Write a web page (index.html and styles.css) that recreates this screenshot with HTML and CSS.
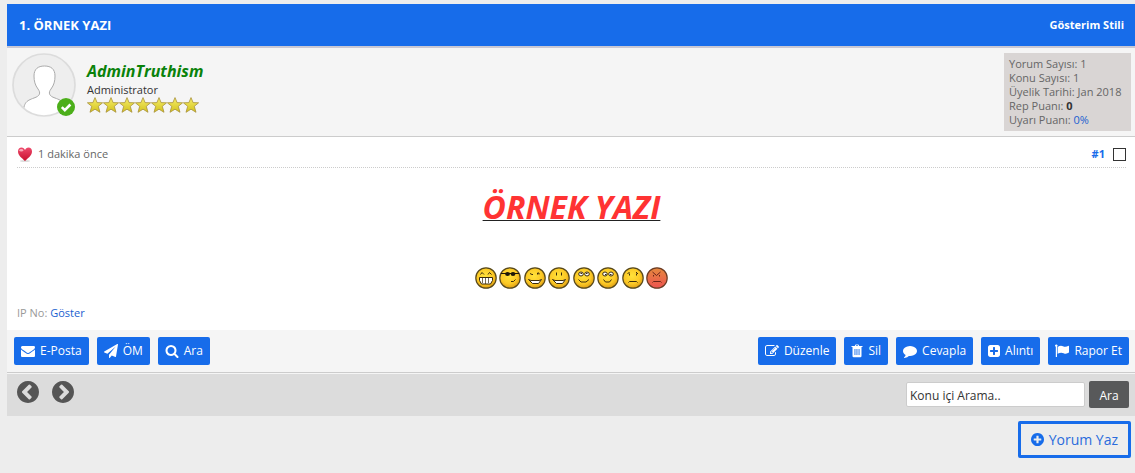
FILE: index.html
```html
<!DOCTYPE html>
<html lang="tr">
<head>
<meta charset="utf-8">
<title>Örnek Yazı</title>
<link rel="stylesheet" href="styles.css">
</head>
<body>
<svg class="defs" aria-hidden="true">
  <defs>
    <radialGradient id="yellow" cx="45%" cy="40%" r="65%"><stop offset="0" stop-color="#ffe23a"/><stop offset=".6" stop-color="#fcc926"/><stop offset="1" stop-color="#d9960f"/></radialGradient>
    <linearGradient id="red" x1="0" y1="0" x2="0" y2="1"><stop offset="0" stop-color="#e58a3e"/><stop offset="1" stop-color="#ee5350"/></linearGradient>
    <linearGradient id="gold" x1="0" y1="0" x2="0" y2="1"><stop offset="0" stop-color="#f7ee6a"/><stop offset="1" stop-color="#d2c21c"/></linearGradient>
    <linearGradient id="rose" x1="0" y1="0" x2="0" y2="1"><stop offset="0" stop-color="#ee4a6c"/><stop offset="1" stop-color="#c8102e"/></linearGradient>
    <symbol id="star" viewBox="0 0 16 16"><path d="M8 .6l2.100 5 5.500.2-4.300 3.500 1.700 6L8 12.200l-5 3.100 1.700-6L.4 5.800l5.500-.2z" fill="url(#gold)" stroke="#a8923c" stroke-width=".8" stroke-linejoin="round"/></symbol>
    <symbol id="face" viewBox="0 0 22 22"><circle cx="11" cy="11" r="10.200" fill="url(#yellow)" stroke="#57481a" stroke-width="1.200"/></symbol>
  </defs>
</svg>
<main class="thread">
  <header class="thread-bar">
    <h1 class="thread-title">1. ÖRNEK YAZI</h1>
    <a class="view-link" href="#">Gösterim Stili</a>
  </header>

  <article class="post">
    <section class="author">
      <div class="avatar">
        <svg class="portrait" viewBox="0 0 64 64" aria-hidden="true">
          <clipPath id="round"><circle cx="32" cy="32" r="31"/></clipPath>
          <circle cx="32" cy="32" r="31" fill="#eee"/>
          <path clip-path="url(#round)" d="M11 66C11 49 14 48 22 45C28 43 29 40 26 36C23 32 22 28 22 23C22 16 26 13 32.500 13C39 13 43 16 43 23C43 28 42 32 39 36C36 40 37 43 43 45C51 48 54 49 56 66z" fill="#fff" stroke="#aaa"/>
          <circle cx="32" cy="32" r="31" fill="none" stroke="#dcdcdc" stroke-width="1.700"/>
        </svg>
        <svg class="online" viewBox="0 0 18 18" aria-hidden="true"><circle cx="9" cy="9" r="9" fill="#4caf1a"/><path d="M4.800 9.200l3 3 5.600-5.700" fill="none" stroke="#fff" stroke-width="2.600"/></svg>
      </div>
      <div class="identity">
        <a class="name" href="#">AdminTruthism</a>
        <span class="role">Administrator</span>
        <span class="stars" role="img" aria-label="7 yıldız">
          <svg><use href="#star"/></svg><svg><use href="#star"/></svg><svg><use href="#star"/></svg><svg><use href="#star"/></svg><svg><use href="#star"/></svg><svg><use href="#star"/></svg><svg><use href="#star"/></svg>
        </span>
      </div>
      <div class="stats">
        <div>Yorum Sayısı: 1</div>
        <div>Konu Sayısı: 1</div>
        <div>Üyelik Tarihi: Jan 2018</div>
        <div>Rep Puanı: <strong>0</strong></div>
        <div>Uyarı Puanı: <a href="#">0%</a></div>
      </div>
    </section>

    <div class="content">
      <div class="meta">
        <svg class="heart" viewBox="0 0 16 16" aria-hidden="true"><ellipse cx="8" cy="15" rx="5" ry="1" fill="#ddd"/><path d="M8 15C5 12 1 9.500 1 5.500C1 3 2.500 1.500 4.500 1.500C6.200 1.500 7.400 2.600 8 4C8.600 2.600 9.800 1.500 11.500 1.500C13.500 1.500 15 3 15 5.500C15 9.500 11 12 8 15z" fill="url(#rose)"/><ellipse cx="4.300" cy="4.200" rx="1.900" ry="1.300" fill="#f9a9b8"/></svg>
        <time>1 dakika önce</time>
        <a class="number" href="#">#1</a>
        <input class="pick" type="checkbox" aria-label="Yorumu seç">
      </div>
      <div class="message">
        <p class="headline"><span>ÖRNEK YAZI</span></p>
        <div class="smileys">
          <svg viewBox="0 0 22 22"><use href="#face"/><g fill="none" stroke="#3b2b0c"><path d="M5.500 7.500l1.500-2 2 2M13 7.500l1.500-2 2 2"/><path d="M4.500 10.500h13v3l-2 3.500h-9l-2-3.500z" fill="#fff"/><path d="M7.500 11v5M10.500 11v6M13.500 11v5" stroke-width=".7"/></g></svg>
          <svg viewBox="0 0 22 22"><use href="#face"/><path d="M2 6.500h18" stroke="#1c1608"/><ellipse cx="8.500" cy="7" rx="2.400" ry="2" fill="#1c1608"/><ellipse cx="14" cy="7" rx="2.400" ry="2" fill="#1c1608"/><path d="M12 14.500h2.500l2-2" fill="none" stroke="#3b2b0c"/></svg>
          <svg viewBox="0 0 22 22"><use href="#face"/><g fill="none" stroke="#3b2b0c"><path d="M6 6.500l2 1h1M13.500 7.500V6h1.500v1.500"/><path d="M4.500 12.500L7 13.500h8l2.500-1-3 4h-6z" fill="#fff"/></g></svg>
          <svg viewBox="0 0 22 22"><use href="#face"/><g fill="none" stroke="#3b2b0c"><path d="M8.500 5.500v3M13.500 5.500v3"/><path d="M4.500 12.500L7 13.500h8l2.500-1-3 4h-6z" fill="#fff"/></g></svg>
          <svg viewBox="0 0 22 22"><use href="#face"/><g fill="#fff" stroke="#3b2b0c"><ellipse cx="8" cy="7" rx="2.300" ry="2"/><ellipse cx="14" cy="7" rx="2.300" ry="2"/><path d="M7.500 6.500h1.500M13 6.500h1.500"/><path d="M5.500 12.500l2.500 2.500h5l3-2.500" fill="none"/></g></svg>
          <svg viewBox="0 0 22 22"><use href="#face"/><g fill="#fff" stroke="#3b2b0c"><ellipse cx="8" cy="7" rx="2.300" ry="2"/><ellipse cx="14" cy="7" rx="2.300" ry="2"/><path d="M8 7.500h1.500M13 7.500h1.500"/><path d="M6.500 12.500l2 2.500h4l2-2.500" fill="none"/></g></svg>
          <svg viewBox="0 0 22 22"><use href="#face"/><path d="M5.500 7l2-2M7.500 6.500v2M14 5l2 2M14.500 6.500v2M6.500 15.500l1-1h7l1 1" fill="none" stroke="#3b2b0c"/></svg>
          <svg viewBox="0 0 22 22"><circle cx="11" cy="11" r="10.200" fill="url(#red)" stroke="#6b3a22" stroke-width="1.200"/><path d="M6.500 5l4 3.500 4-3.500M7.500 8v1.500M13.500 8v1.500M6.500 15.500l1-1h7l1 1" fill="none" stroke="#6b2418"/></svg>
        </div>
      </div>
      <p class="ip">IP No: <a href="#">Göster</a></p>
    </div>

    <footer class="actions">
      <button type="button" class="btn"><svg viewBox="0 0 1792 1792"><path d="M1792 710v794q0 66-47 113t-113 47h-1472q-66 0-113-47t-47-113v-794q44 49 101 87 362 246 497 345 57 42 92.500 65.500t94.500 48 110 24.500h2q51 0 110-24.500t94.500-48 92.500-65.500q170-123 498-345 57-39 100-87zm0-294q0 79-49 151t-122 123q-376 261-468 325-10 7-42.500 31t-54 38.500-52 32.500-57.500 27-50 9h-2q-23 0-50-9t-57.500-27-52-32.500-54-38.500-42.500-31q-91-64-262-182.500t-205-142.500q-62-42-117-115.500t-55-136.500q0-78 41.500-130t118.500-52h1472q65 0 112.500 47t47.500 113z"/></svg>E-Posta</button>
      <button type="button" class="btn"><svg viewBox="0 0 1792 1792"><path d="M1764 11q33 24 27 64l-256 1536q-5 29-32 45-14 8-31 8-11 0-24-5l-453-185-242 295q-18 23-49 23-13 0-22-4-19-7-30.500-23.500t-11.500-36.500v-349l864-1059-1069 925-395-162q-37-14-40-55-2-40 32-59l1664-960q15-9 32-9 20 0 36 11z"/></svg>ÖM</button>
      <button type="button" class="btn"><svg viewBox="0 0 1792 1792"><path d="M1216 832q0-185-131.500-316.500t-316.500-131.500-316.500 131.500-131.500 316.500 131.500 316.500 316.500 131.500 316.500-131.500 131.500-316.500zm512 832q0 52-38 90t-90 38q-54 0-90-38l-343-342q-179 124-399 124-143 0-273.500-55.500t-225-150-150-225-55.500-273.500 55.500-273.500 150-225 225-150 273.500-55.500 273.500 55.500 225 150 150 225 55.500 273.500q0 220-124 399l343 343q37 37 37 90z"/></svg>Ara</button>
      <span class="spacer"></span>
      <button type="button" class="btn"><svg viewBox="0 0 1792 1792"><path d="M888 1184l116-116-152-152-116 116v56h96v96h56zm440-720q-16-16-33 1l-350 350q-17 17-1 33t33-1l350-350q17-17 1-33zm80 594v190q0 119-84.500 203.500t-203.500 84.500h-832q-119 0-203.500-84.500t-84.500-203.500v-832q0-119 84.500-203.500t203.500-84.500h832q63 0 117 25 15 7 18 23 3 17-9 29l-49 49q-14 14-32 8-23-6-45-6h-832q-66 0-113 47t-47 113v832q0 66 47 113t113 47h832q66 0 113-47t47-113v-126q0-13 9-22l64-64q15-15 35-7t20 29zm-96-738l288 288-672 672h-288v-288zm444 132l-92 92-288-288 92-92q28-28 68-28t68 28l152 152q28 28 28 68t-28 68z"/></svg>Düzenle</button>
      <button type="button" class="btn"><svg class="narrow" viewBox="0 0 11 14"><path fill-rule="evenodd" d="M3.300 2L3.800.8Q4 .4 4.500.4h2q.5 0 .7.400L7.700 2H11v1h-1v9q0 1.300-1.200 1.300H2.200Q1 13.300 1 12V3H0V2zM4.400 2h2.200l-.3-.7H4.700zM3 5v6h.9V5zM5 5v6h.9V5zM7.100 5v6H8V5z"/></svg>Sil</button>
      <button type="button" class="btn"><svg viewBox="0 0 1792 1792"><path d="M1792 896q0 174-120 321.500t-326 233-450 85.500q-70 0-145-8-198 175-460 242-49 14-114 22-17 2-30.500-9t-17.500-29v-1q-3-4-.5-12t2-10 4.500-9.500l6-9 7-8.500 8-9q7-8 31-34.500t34.500-38 31-39.500 32.500-51 27-59 26-76q-157-89-247.500-220t-90.500-281q0-130 71-248.500t191-204.500 286-136.500 348-50.500q244 0 450 85.500t326 233 120 321.500z"/></svg>Cevapla</button>
      <button type="button" class="btn"><svg class="narrow" viewBox="128 0 1536 1792"><path d="M1408 960v-128q0-26-19-45t-45-19h-320v-320q0-26-19-45t-45-19h-128q-26 0-45 19t-19 45v320h-320q-26 0-45 19t-19 45v128q0 26 19 45t45 19h320v320q0 26 19 45t45 19h128q26 0 45-19t19-45v-320h320q26 0 45-19t19-45zm256-544v960q0 119-84.500 203.500t-203.500 84.500h-960q-119 0-203.500-84.500t-84.500-203.500v-960q0-119 84.500-203.500t203.500-84.500h960q119 0 203.500 84.500t84.500 203.500z"/></svg>Alıntı</button>
      <button type="button" class="btn"><svg viewBox="0 0 14 14"><path d="M0 1.800a1.300 1.300 0 1 1 2 1V13H.8V2.800Q0 2.400 0 1.800zM2.600 3Q5.500.9 8 2.200T13.500 1.800q.5-.1.500.4V8.600Q11.300 10.500 8.600 9.200T2.600 9.700z"/></svg>Rapor Et</button>
    </footer>
  </article>

  <nav class="thread-nav">
    <a class="step" href="#" aria-label="Önceki konu"><svg viewBox="128 128 1536 1536"><path d="M1037 1395l102-102q19-19 19-45t-19-45l-307-307 307-307q19-19 19-45t-19-45l-102-102q-19-19-45-19t-45 19l-454 454q-19 19-19 45t19 45l454 454q19 19 45 19t45-19zm627-499q0 209-103 385.500t-279.500 279.500-385.500 103-385.500-103-279.500-279.500-103-385.500 103-385.500 279.500-279.500 385.500-103 385.500 103 279.500 279.500 103 385.500z"/></svg></a>
    <a class="step" href="#" aria-label="Sonraki konu"><svg viewBox="128 128 1536 1536"><path transform="matrix(-1 0 0 1 1792 0)" d="M1037 1395l102-102q19-19 19-45t-19-45l-307-307 307-307q19-19 19-45t-19-45l-102-102q-19-19-45-19t-45 19l-454 454q-19 19-19 45t19 45l454 454q19 19 45 19t45-19zm627-499q0 209-103 385.500t-279.500 279.500-385.500 103-385.500-103-279.500-279.500-103-385.500 103-385.500 279.500-279.500 385.500-103 385.500 103 279.500 279.500 103 385.500z"/></svg></a>
    <form class="search">
      <input class="search-box" type="text" value="Konu içi Arama.." aria-label="Konu içi arama">
      <button class="search-go" type="button">Ara</button>
    </form>
  </nav>
  <div class="reply-row">
    <a class="reply" href="#"><svg viewBox="128 128 1536 1536"><path d="M1344 960v-128q0-26-19-45t-45-19h-256v-256q0-26-19-45t-45-19h-128q-26 0-45 19t-19 45v256h-256q-26 0-45 19t-19 45v128q0 26 19 45t45 19h256v256q0 26 19 45t45 19h128q26 0 45-19t19-45v-256h256q26 0 45-19t19-45zm320-64q0 209-103 385.500t-279.500 279.500-385.500 103-385.500-103-279.500-279.500-103-385.500 103-385.500 279.500-279.500 385.500-103 385.500 103 279.500 279.500 103 385.500z"/></svg>Yorum Yaz</a>
  </div>
</main>
</body>
</html>
```
FILE: styles.css
```css
* { box-sizing: border-box; }
body {
  margin: 0;
  background: #ededed;
  color: #666;
  font: 11px/14px "Open Sans", sans-serif;
}
a { color: #1a5fd0; text-decoration: none; }
p, h1 { margin: 0; }
svg { display: block; flex: none; }
.defs { position: absolute; width: 0; height: 0; }
.thread { padding: 4px 0 0 7px; }

.thread-bar {
  display: flex;
  align-items: center;
  justify-content: space-between;
  height: 44px;
  padding: 0 11px 0 12px;
  background: #176cea;
  border-bottom: 2px solid #c8c8d4;
}
.thread-title { color: #fff; font-size: 13px; line-height: 18px; font-weight: 700; }
.view-link { color: #fff; font-weight: 700; }

.author {
  display: flex;
  align-items: flex-start;
  min-height: 89px;
  padding: 5px 4px 5px 5px;
  background: #f5f5f5;
  border-bottom: 1px solid #ccc;
}
.avatar { position: relative; width: 64px; margin-right: 11px; }
.portrait { width: 64px; height: 64px; }
.online { position: absolute; right: 1px; bottom: 1px; width: 18px; height: 18px; }
.identity { display: flex; flex-direction: column; flex: 1; padding-top: 6px; }
.name { color: #0a820a; font-size: 16px; line-height: 24px; font-weight: 700; font-style: italic; }
.role { color: #333; }
.stars { display: flex; }
.stars svg { width: 16px; height: 16px; }
.stats { width: 127px; padding: 4px 5px; background: #d9d5d4; }
.stats strong { color: #333; }

.content { background: #fff; padding: 8px 9px 10px 10px; }
.meta {
  display: flex;
  align-items: center;
  height: 23px;
  padding-bottom: 4px;
  border-bottom: 1px dotted #ccc;
}
.heart { width: 16px; height: 16px; margin-right: 5px; }
.number { margin-left: auto; color: #176cea; font-weight: 700; }
.pick {
  appearance: none;
  width: 13px;
  height: 13px;
  margin: 0 0 0 8px;
  border: 1px solid #333;
  background: #fff;
}
.message { padding-top: 16px; text-align: center; }
.headline {
  color: #222;
  font-size: 32px;
  line-height: 46px;
  font-weight: 700;
  font-style: italic;
}
.headline span { color: #f33; text-decoration: underline 1px #222; text-underline-offset: 1px; text-decoration-skip-ink: none; }
.smileys { display: flex; justify-content: space-between; width: 194px; margin: 37px auto 0; }
.smileys svg { width: 22px; height: 22px; }
.ip { margin-top: 17px; color: #999; }

.actions {
  display: flex;
  gap: 8px;
  padding: 7px 6px 7px 7px;
  background: #f5f5f5;
  border-bottom: 1px solid #ccc;
}
.spacer { flex: 1; }
.btn {
  display: flex;
  align-items: center;
  gap: 5px;
  height: 28px;
  padding: 0 7px;
  border: 0;
  border-radius: 2px;
  background: #176cea;
  color: #fff;
  font: 12px/18px "Open Sans", sans-serif;
  white-space: nowrap;
}
.btn svg { width: 14px; height: 14px; fill: #fff; }
.btn .narrow { width: 12px; }

.thread-nav {
  display: flex;
  gap: 13px;
  height: 43px;
  padding: 7px 6px 0 10px;
  background: #dcdcdc;
  border-top: 1px solid #f5f5f5;
}
.step svg { width: 22px; height: 22px; fill: #555; }
.search { display: flex; align-items: center; align-self: flex-start; gap: 4px; margin-left: auto; }
.search-box {
  width: 179px;
  height: 25px;
  padding: 2px 3px 0;
  border: 1px solid #ccc;
  border-radius: 2px;
  color: #333;
  font: 12px/18px "Open Sans", sans-serif;
}
.search-go {
  width: 40px;
  height: 27px;
  padding: 2px 0 0;
  border: 0;
  border-radius: 2px;
  background: #58595a;
  color: #fff;
  font: 12px/18px "Open Sans", sans-serif;
}
.reply-row { display: flex; justify-content: flex-end; padding: 5px 4px 0 0; }
.reply {
  display: flex;
  align-items: center;
  gap: 5px;
  height: 37px;
  padding: 0 10px;
  border: 3px solid #176cea;
  border-radius: 2px;
  color: #2a6bdc;
  font-size: 14px;
  line-height: 20px;
}
.reply svg { width: 13px; height: 13px; fill: #176cea; }
```
